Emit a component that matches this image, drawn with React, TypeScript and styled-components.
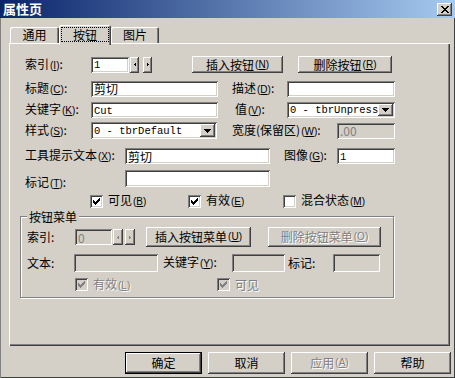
import React from 'react';
import styled, { createGlobalStyle, css } from 'styled-components';

const FACE = '#d4d0c8';

const GlobalStyle = createGlobalStyle`
  html, body {
    margin: 0;
    padding: 0;
    background: ${FACE};
  }
  body {
    font-family: "Noto Sans CJK SC", "Liberation Sans", sans-serif;
    font-size: 12px;
    color: #000;
  }
  * {
    box-sizing: border-box;
  }
`;

const raised = css`
  box-shadow: inset -1px -1px #404040, inset 1px 1px #ffffff, inset -2px -2px #808080, inset 2px 2px ${FACE};
`;

const sunken = css`
  box-shadow: inset 1px 1px #808080, inset -1px -1px #ffffff, inset 2px 2px #404040, inset -2px -2px ${FACE};
`;

const greyText = css`
  color: #808080;
  text-shadow: 1px 1px #ffffff;
`;

function Key({ k }: { k: string }) {
  return (
    <Mn>
      (<u>{k}</u>)
    </Mn>
  );
}

function CheckMark({ color }: { color: string }) {
  const tops = [2, 3, 4, 3, 2, 1, 0];
  return (
    <svg width="7" height="7" viewBox="0 0 7 7" shapeRendering="crispEdges">
      {tops.map((y, x) => (
        <rect key={x} x={x} y={y} width="1" height="3" fill={color} />
      ))}
    </svg>
  );
}

function CloseGlyph() {
  const rows = [
    [0, 1, 6, 7],
    [1, 2, 5, 6],
    [2, 3, 4, 5],
    [3, 4],
    [2, 3, 4, 5],
    [1, 2, 5, 6],
    [0, 1, 6, 7],
  ];
  return (
    <svg width="8" height="7" viewBox="0 0 8 7" shapeRendering="crispEdges">
      {rows.map((xs, y) =>
        xs.map(x => <rect key={`${x}-${y}`} x={x} y={y} width="1" height="1" fill="#000" />)
      )}
    </svg>
  );
}

function DownArrow() {
  return (
    <svg width="7" height="4" viewBox="0 0 7 4" shapeRendering="crispEdges">
      <rect x="0" y="0" width="7" height="1" fill="#000" />
      <rect x="1" y="1" width="5" height="1" fill="#000" />
      <rect x="2" y="2" width="3" height="1" fill="#000" />
      <rect x="3" y="3" width="1" height="1" fill="#000" />
    </svg>
  );
}

function SpinArrow({ dir, disabled }: { dir: 'left' | 'right'; disabled?: boolean }) {
  const c = disabled ? '#808080' : '#000';
  return (
    <svg width="2" height="3" viewBox="0 0 2 3" shapeRendering="crispEdges">
      {dir === 'left' ? (
        <>
          <rect x="0" y="1" width="1" height="1" fill={c} />
          <rect x="1" y="0" width="1" height="3" fill={c} />
        </>
      ) : (
        <>
          <rect x="0" y="0" width="1" height="3" fill={c} />
          <rect x="1" y="1" width="1" height="1" fill={c} />
        </>
      )}
    </svg>
  );
}

function CheckItem({
  w,
  checked,
  disabled,
  children,
}: {
  w?: number;
  checked?: boolean;
  disabled?: boolean;
  children: React.ReactNode;
}) {
  return (
    <CheckLabel $w={w} $disabled={disabled}>
      <CheckBox $disabled={disabled}>
        {checked && <CheckMark color={disabled ? '#808080' : '#000'} />}
      </CheckBox>
      <span>{children}</span>
    </CheckLabel>
  );
}

function Combo({ w, h, children }: { w: number; h?: number; children: React.ReactNode }) {
  return (
    <ComboBox $w={w} $h={h ?? 16}>
      <ComboText>{children}</ComboText>
      <DropButton>
        <DownArrow />
      </DropButton>
    </ComboBox>
  );
}

export default function App() {
  return (
    <>
      <GlobalStyle />
      <Window>
        <TitleBar>
          <span>属性页</span>
          <CloseButton>
            <CloseGlyph />
          </CloseButton>
        </TitleBar>

        <TabStrip>
          <Tab $w={49}>通用</Tab>
          <Tab $w={52} $active>
            <FocusRect>按钮</FocusRect>
          </Tab>
          <Tab $w={48}>图片</Tab>
        </TabStrip>

        <Page>
          <Row $top={13} $h={17}>
            <Label $w={66}>
              索引<Key k="I" />:
            </Label>
            <Field $w={38} $mono>1</Field>
            <Spin $ml={1} $w={9}>
              <SpinArrow dir="left" />
            </Spin>
            <Spin $ml={4} $w={9}>
              <SpinArrow dir="right" />
            </Spin>
            <Button $ml={40} $w={91} $h={17}>
              插入按钮<Key k="N" />
            </Button>
            <Button $ml={15} $w={94} $h={17}>
              删除按钮<Key k="R" />
            </Button>
          </Row>

          <Row $top={7} $h={17}>
            <Label $w={66}>
              标题<Key k="C" />:
            </Label>
            <Field $w={127}>剪切</Field>
            <Label $ml={14} $w={55}>
              描述<Key k="D" />:
            </Label>
            <Field $w={108} />
          </Row>

          <Row $top={5} $h={16}>
            <Label $w={66}>
              关键字<Key k="K" />:
            </Label>
            <Field $w={127} $mono>Cut</Field>
            <Label $ml={17} $w={52}>
              值<Key k="V" />:
            </Label>
            <Combo w={108}>0 - tbrUnpress</Combo>
          </Row>

          <Row $top={4} $h={17}>
            <Label $w={66}>
              样式<Key k="S" />:
            </Label>
            <Combo w={126} h={17}>0 - tbrDefault</Combo>
            <Label $ml={15} $w={105}>
              宽度(保留区)<Key k="W" />:
            </Label>
            <Field $w={58} $disabled>.00</Field>
          </Row>

          <Row $top={9} $h={16}>
            <Label $w={100}>
              工具提示文本<Key k="X" />:
            </Label>
            <Field $w={145}>剪切</Field>
            <Label $ml={14} $w={53}>
              图像<Key k="G" />:
            </Label>
            <Field $w={58} $mono>1</Field>
          </Row>

          <Row $top={6} $h={17}>
            <Label $w={100} $dy={4}>
              标记<Key k="T" />:
            </Label>
            <Field $w={145} $h={17} />
          </Row>

          <Row $top={7} $h={14} $pl={81}>
            <CheckItem w={98} checked>
              可见<Key k="B" />
            </CheckItem>
            <CheckItem w={95} checked>
              有效<Key k="E" />
            </CheckItem>
            <CheckItem>
              混合状态<Key k="M" />
            </CheckItem>
          </Row>

          <GroupBox>
            <GroupTitle>按钮菜单</GroupTitle>
            <Row $top={10} $h={20} $pl={6}>
              <Label $w={48}>索引:</Label>
              <Field $w={37} $disabled>0</Field>
              <Spin $ml={1} $w={10}>
                <SpinArrow dir="left" disabled />
              </Spin>
              <Spin $ml={2} $w={10}>
                <SpinArrow dir="right" disabled />
              </Spin>
              <Button $ml={11} $w={105} $h={20}>
                插入按钮菜单<Key k="U" />
              </Button>
              <Button $ml={17} $w={113} $h={20} $disabled>
                删除按钮菜单<Key k="O" />
              </Button>
            </Row>

            <Row $top={7} $h={18} $pl={6}>
              <Label $w={47}>文本:</Label>
              <Field $w={84} $h={18} $disabled />
              <Label $ml={5} $w={69}>
                关键字<Key k="Y" />:
              </Label>
              <Field $w={53} $h={18} $disabled />
              <Label $ml={3} $w={45}>标记:</Label>
              <Field $w={47} $h={18} $disabled />
            </Row>

            <Row $top={6} $h={13} $pl={54}>
              <CheckItem w={142} checked disabled>
                有效<Key k="L" />
              </CheckItem>
              <CheckItem checked disabled>
                可见
              </CheckItem>
            </Row>
          </GroupBox>
        </Page>

        <ButtonBar>
          <Button $w={77} $h={22} $default>确定</Button>
          <Button $w={77} $h={22}>取消</Button>
          <Button $w={77} $h={22} $disabled>
            应用<Key k="A" />
          </Button>
          <Button $w={77} $h={22}>帮助</Button>
        </ButtonBar>
      </Window>
    </>
  );
}

const Window = styled.div`
  width: 455px;
  height: 378px;
  display: flex;
  flex-direction: column;
  background: ${FACE};
  box-shadow: inset 1px 0 #808080, inset -1px -1px #404040;
  overflow: hidden;
`;

const TitleBar = styled.div`
  flex: none;
  height: 18px;
  display: flex;
  align-items: center;
  justify-content: space-between;
  padding: 0 3px;
  background: linear-gradient(to right, #0a246a, #a6caf0);
  color: #ffffff;
  font-size: 13px;
  font-weight: bold;
  line-height: 18px;
`;

const CloseButton = styled.div`
  width: 15px;
  height: 13px;
  display: flex;
  align-items: center;
  justify-content: center;
  background: ${FACE};
  ${raised}
`;

const TabStrip = styled.div`
  flex: none;
  display: flex;
  align-items: flex-end;
  height: 18px;
  margin: 7px 0 0 10px;
  position: relative;
  z-index: 1;
`;

const Tab = styled.div<{ $w: number; $active?: boolean }>`
  flex: none;
  width: ${p => p.$w}px;
  height: ${p => (p.$active ? 20 : 16)}px;
  margin-bottom: ${p => (p.$active ? -2 : 0)}px;
  padding: ${p => (p.$active ? '2px 2px 3px 2px' : '0')};
  display: flex;
  align-items: center;
  justify-content: center;
  background: ${FACE};
  border-radius: 2px 2px 0 0;
  box-shadow: inset 1px 1px #ffffff, inset -1px 0 #404040, inset -2px 0 #808080;
  line-height: 14px;
`;

const FocusRect = styled.span`
  flex: 1;
  align-self: stretch;
  display: flex;
  align-items: center;
  justify-content: center;
  border: 1px dotted #000;
`;

const Page = styled.div`
  flex: none;
  margin-left: 9px;
  width: 441px;
  height: 303px;
  display: flex;
  flex-direction: column;
  box-shadow: inset 1px 1px #ffffff, inset -1px -1px #404040, inset -2px -2px #808080;
`;

const Row = styled.div<{ $top: number; $h: number; $pl?: number }>`
  flex: none;
  display: flex;
  align-items: center;
  margin-top: ${p => p.$top}px;
  height: ${p => p.$h}px;
  padding-left: ${p => p.$pl ?? 16}px;
`;

const Label = styled.span<{ $w: number; $ml?: number; $dy?: number }>`
  flex: none;
  width: ${p => p.$w}px;
  margin-left: ${p => p.$ml ?? 0}px;
  margin-top: ${p => (p.$dy ?? 0) * 2}px;
  white-space: nowrap;
  line-height: 14px;
`;

const Mn = styled.span`
  font-family: "Liberation Sans", sans-serif;
  font-size: 10px;
  margin-left: 1px;
`;

const Field = styled.div<{ $w: number; $h?: number; $ml?: number; $mono?: boolean; $disabled?: boolean }>`
  flex: none;
  width: ${p => p.$w}px;
  height: ${p => p.$h ?? 16}px;
  margin-left: ${p => p.$ml ?? 0}px;
  padding: 1px 3px 0;
  display: flex;
  align-items: center;
  overflow: hidden;
  white-space: nowrap;
  line-height: 12px;
  background: ${p => (p.$disabled ? FACE : '#ffffff')};
  color: ${p => (p.$disabled ? '#808080' : '#000')};
  font-family: ${p => (p.$mono ? '"Liberation Mono", monospace' : 'inherit')};
  font-size: ${p => (p.$mono ? '10.5px' : '12px')};
  ${sunken}
`;

const ComboBox = styled.div<{ $w: number; $h: number }>`
  flex: none;
  width: ${p => p.$w}px;
  height: ${p => p.$h}px;
  padding: 2px;
  display: flex;
  background: #ffffff;
  ${sunken}
`;

const ComboText = styled.div`
  flex: 1;
  min-width: 0;
  display: flex;
  align-items: center;
  padding-left: 1px;
  overflow: hidden;
  white-space: nowrap;
  font-family: "Liberation Mono", monospace;
  font-size: 10.5px;
  line-height: 12px;
`;

const DropButton = styled.div`
  flex: none;
  width: 15px;
  display: flex;
  align-items: center;
  justify-content: center;
  background: ${FACE};
  ${raised}
`;

const Spin = styled.div<{ $w: number; $ml: number }>`
  flex: none;
  width: ${p => p.$w}px;
  height: 16px;
  margin-left: ${p => p.$ml}px;
  display: flex;
  align-items: center;
  justify-content: center;
  background: ${FACE};
  ${raised}
`;

const Button = styled.div<{ $w: number; $h: number; $ml?: number; $default?: boolean; $disabled?: boolean }>`
  flex: none;
  width: ${p => p.$w}px;
  height: ${p => p.$h}px;
  margin-left: ${p => p.$ml ?? 0}px;
  display: flex;
  align-items: center;
  justify-content: center;
  white-space: nowrap;
  line-height: 14px;
  background: ${FACE};
  ${p =>
    p.$default
      ? css`
          box-shadow: inset 0 0 0 1px #000, inset -2px -2px #404040, inset 2px 2px #ffffff,
            inset -3px -3px #808080;
        `
      : raised}
  ${p => p.$disabled && greyText}
`;

const CheckLabel = styled.span<{ $w?: number; $disabled?: boolean }>`
  flex: none;
  width: ${p => (p.$w ? `${p.$w}px` : 'auto')};
  display: flex;
  align-items: center;
  gap: 5px;
  white-space: nowrap;
  line-height: 14px;
  ${p => p.$disabled && greyText}
`;

const CheckBox = styled.span<{ $disabled?: boolean }>`
  flex: none;
  width: 13px;
  height: 13px;
  display: flex;
  align-items: center;
  justify-content: center;
  background: ${p => (p.$disabled ? FACE : '#ffffff')};
  ${sunken}
`;

const GroupBox = styled.div`
  flex: none;
  position: relative;
  margin: 8px 0 0 11px;
  width: 374px;
  height: 82px;
  display: flex;
  flex-direction: column;
  border: 1px solid #808080;
  box-shadow: inset 1px 1px #ffffff, 1px 1px #ffffff;
`;

const GroupTitle = styled.span`
  position: absolute;
  top: -7px;
  left: 6px;
  padding: 0 2px;
  line-height: 13px;
  background: ${FACE};
`;

const ButtonBar = styled.div`
  flex: none;
  display: flex;
  gap: 6px;
  margin-top: 6px;
  padding-left: 125px;
`;
